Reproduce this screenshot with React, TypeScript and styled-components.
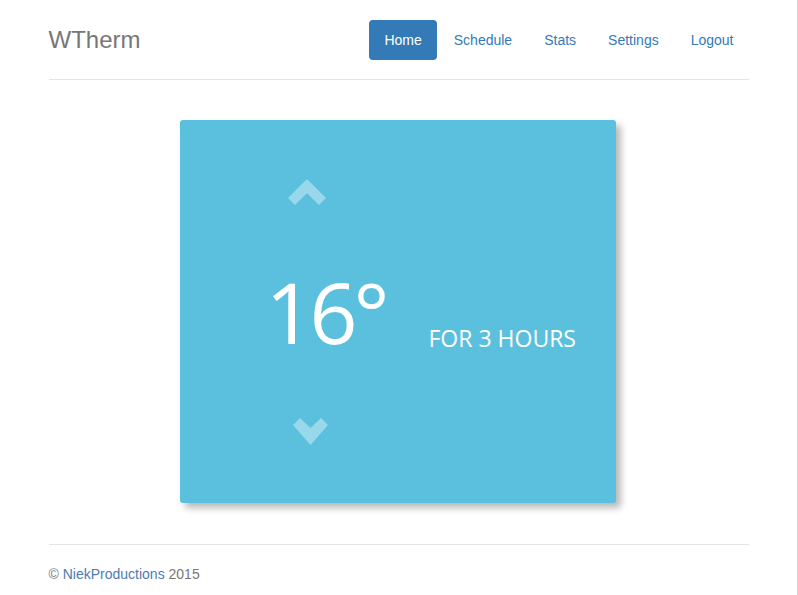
import React from 'react';
import styled, { createGlobalStyle } from 'styled-components';

const GlobalStyle = createGlobalStyle`
  html, body {
    margin: 0;
    padding: 0;
    background: #fff;
  }
  body {
    font-family: "Liberation Sans", Arial, sans-serif;
    font-size: 14px;
    line-height: 20px;
    color: #333;
  }
  #root {
    min-height: 100vh;
    border-right: 1px solid #cfcfcf;
    padding-top: 20px;
    box-sizing: border-box;
  }
`;

const Container = styled.div`
  width: 700px;
  margin: 0 auto;
`;

const Header = styled.div`
  display: flex;
  justify-content: space-between;
  align-items: center;
  padding-bottom: 19px;
  border-bottom: 1px solid #e5e5e5;

  .brand {
    margin: 0;
    font-size: 24px;
    font-weight: normal;
    line-height: 40px;
    color: #777;
  }
`;

const Nav = styled.ul`
  display: flex;
  list-style: none;
  margin: 0;
  padding: 0;
  gap: 2px;
`;

const NavLink = styled.a<{ $active?: boolean }>`
  display: block;
  padding: 10px 15px;
  border-radius: 4px;
  text-decoration: none;
  color: ${p => (p.$active ? '#fff' : '#337ab7')};
  background: ${p => (p.$active ? '#337ab7' : 'transparent')};
`;

const Card = styled.div`
  width: 436px;
  height: 383px;
  margin: 40px 0 41px 131px;
  background: #5bc0de;
  border-radius: 3px;
  box-shadow: 5px 5px 7px rgba(0, 0, 0, 0.28);
  box-sizing: border-box;
  padding: 59px 0 0 86px;
  display: flex;
  align-items: flex-start;
  font-family: "Open Sans", "Liberation Sans", sans-serif;
  color: #fff;
`;

const TempColumn = styled.div`
  width: 163px;
  display: flex;
  flex-direction: column;
  align-items: flex-start;
`;

const Arrow = styled.svg<{ $offset: number }>`
  display: block;
  margin-left: ${p => p.$offset}px;
  fill: rgba(255, 255, 255, 0.38);
  cursor: pointer;
`;

const Temp = styled.div`
  font-size: 84px;
  font-weight: 400;
  line-height: 1;
  margin: 64px 0 64px 0;
  letter-spacing: -4px;
`;

const Duration = styled.div`
  margin-top: 148px;
  font-size: 23px;
  line-height: 1;
  white-space: nowrap;
`;

const Footer = styled.footer`
  border-top: 1px solid #e5e5e5;
  padding-top: 19px;
  color: #777;

  a {
    color: #4d7bb0;
    text-decoration: none;
  }
`;

export default function App() {
  const pages = ['Home', 'Schedule', 'Stats', 'Settings', 'Logout'];
  return (
    <>
      <GlobalStyle />
      <Container>
        <Header>
          <h3 className="brand">WTherm</h3>
          <Nav>
            {pages.map(p => (
              <li key={p}>
                <NavLink href="#" $active={p === 'Home'}>{p}</NavLink>
              </li>
            ))}
          </Nav>
        </Header>

        <Card>
          <TempColumn>
            <Arrow $offset={22} width="38" height="27" viewBox="0 0 38 27">
              <polygon points="19,0 38,19 31,26 19,14 7,26 0,19" />
            </Arrow>
            <Temp>16°</Temp>
            <Arrow $offset={27} width="35" height="27" viewBox="0 0 35 27">
              <polygon points="0,7 7,0 17.5,10 28,0 35,7 17.5,27" />
            </Arrow>
          </TempColumn>
          <Duration>FOR 3 HOURS</Duration>
        </Card>

        <Footer>
          &copy; <a href="#">NiekProductions</a> 2015
        </Footer>
      </Container>
    </>
  );
}
